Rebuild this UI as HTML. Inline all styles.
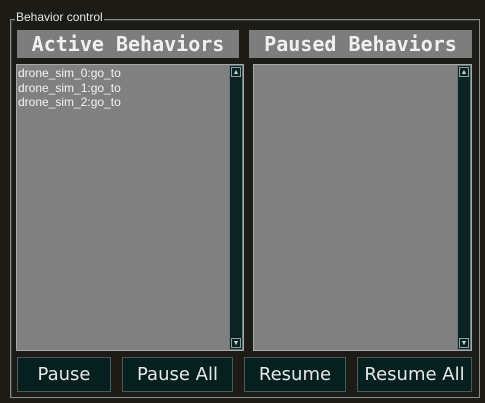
<!DOCTYPE html><html><head><style>
body{margin:0;width:485px;height:403px;background:#1d1b16;position:relative;overflow:hidden;font-family:"Liberation Sans",sans-serif}
.a{position:absolute;box-sizing:border-box}
.frame{left:10px;top:19px;width:470px;height:379px;border:1px solid #8a8a86;box-shadow:inset 1px 1px 0 #3a3a36}
.lg{left:15px;top:10px;color:#e6e6e6;font-size:12px;background:#1d1b16;padding:0 1px;line-height:14px}
.hd{background:#7d7d7d;color:#f0f0f0;font-family:"DejaVu Sans Mono","Liberation Mono",monospace;font-weight:bold;font-size:20px;text-align:center;line-height:28px;height:28px;top:30px}
.lb{background:#808080;border:1px solid #a8a8a8;top:64px;height:287px}
.sb{background:#0b2323;border:1px solid #6a7a7a;top:65px;width:14px;height:285px}
.ar{left:1px;width:10px;height:10px;background:#0b2323;border:1px solid #8fa0a0;color:#c8d0d0;font-size:7px;line-height:9px;text-align:center}
.it{color:#f2f2f2;font-size:12px;line-height:14.5px;padding:1px 0 0 1px}
.bt{top:357px;height:35px;background:#062020;border:1px solid #4a5a5a;color:#e8e8e8;font-family:"DejaVu Sans",sans-serif;font-size:18px;line-height:33px;text-align:center}
</style></head><body>
<div class="a frame"></div>
<div class="a lg">Behavior control</div>
<div class="a hd" style="left:17px;width:222px">Active Behaviors</div>
<div class="a hd" style="left:249px;width:223px">Paused Behaviors</div>
<div class="a lb" style="left:16px;width:228px"><div class="it">drone_sim_0:go_to<br>drone_sim_1:go_to<br>drone_sim_2:go_to</div></div>
<div class="a sb" style="left:229px"><div class="a ar" style="top:1px">▲</div><div class="a ar" style="bottom:1px">▼</div></div>
<div class="a lb" style="left:253px;width:219px"></div>
<div class="a sb" style="left:457px"><div class="a ar" style="top:1px">▲</div><div class="a ar" style="bottom:1px">▼</div></div>
<div class="a bt" style="left:17px;width:94px">Pause</div>
<div class="a bt" style="left:122px;width:111px">Pause All</div>
<div class="a bt" style="left:244px;width:102px">Resume</div>
<div class="a bt" style="left:357px;width:115px">Resume All</div>
</body></html>
